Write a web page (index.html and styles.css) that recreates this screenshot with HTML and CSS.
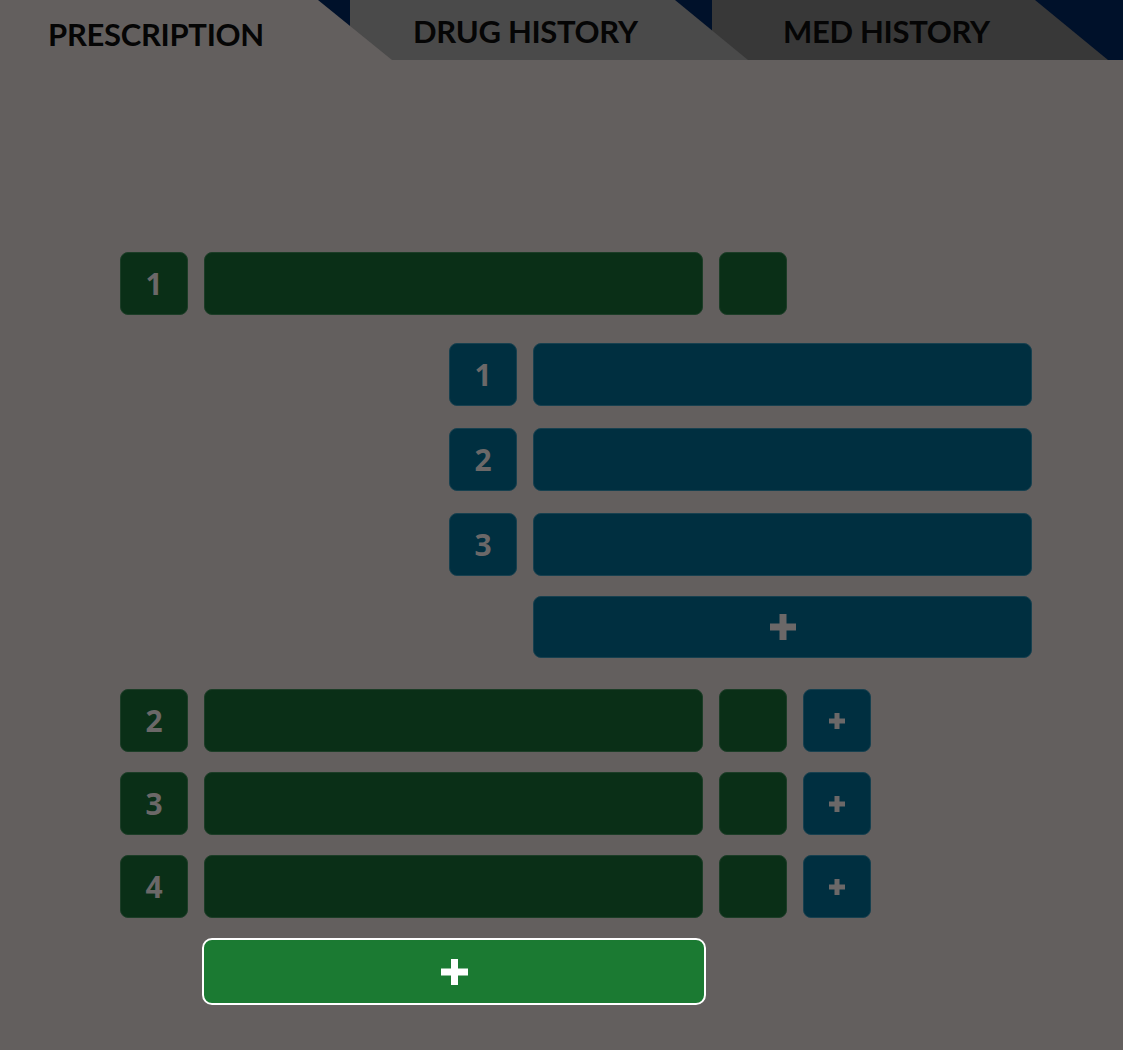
FILE: index.html
```html
<!DOCTYPE html>
<html lang="en">
<head>
    <meta charset="UTF-8">
    <meta name="viewport" content="width=device-width, initial-scale=1.0">
    <title>Prescription</title>
    <link rel="stylesheet" href="styles.css">
</head>
<body>
    <!-- 상단 탭 -->
    <header class="tabs">
        <div class="tab tab-prescription active">PRESCRIPTION</div>
        <div class="tab tab-drug">DRUG HISTORY</div>
        <div class="tab tab-med">MED HISTORY</div>
    </header>

    <main class="rx-list">
        <!-- 처방 1 -->
        <div class="rx-row">
            <div class="box num green">1</div>
            <div class="box bar green"></div>
            <div class="box small green"></div>
        </div>

        <!-- 처방 1의 하위 항목 -->
        <div class="sub-list">
            <div class="sub-row">
                <div class="box num blue">1</div>
                <div class="box bar blue"></div>
            </div>
            <div class="sub-row">
                <div class="box num blue">2</div>
                <div class="box bar blue"></div>
            </div>
            <div class="sub-row">
                <div class="box num blue">3</div>
                <div class="box bar blue"></div>
            </div>
            <div class="box bar blue sub-add">
                <svg width="26" height="26" viewBox="0 0 26 26"><path d="M9.5 0h7v9.5H26v7h-9.5V26h-7v-9.5H0v-7h9.5z" fill="#6b6868"/></svg>
            </div>
        </div>

        <div class="rx-group">
            <div class="rx-row">
                <div class="box num green">2</div>
                <div class="box bar green"></div>
                <div class="box small green"></div>
                <div class="box small blue plus-small">
                    <svg width="16" height="16" viewBox="0 0 16 16"><path d="M5.5 0h5v5.5H16v5h-5.5V16h-5v-5.5H0v-5h5.5z" fill="#6b6868"/></svg>
                </div>
            </div>
            <div class="rx-row">
                <div class="box num green">3</div>
                <div class="box bar green"></div>
                <div class="box small green"></div>
                <div class="box small blue plus-small">
                    <svg width="16" height="16" viewBox="0 0 16 16"><path d="M5.5 0h5v5.5H16v5h-5.5V16h-5v-5.5H0v-5h5.5z" fill="#6b6868"/></svg>
                </div>
            </div>
            <div class="rx-row">
                <div class="box num green">4</div>
                <div class="box bar green"></div>
                <div class="box small green"></div>
                <div class="box small blue plus-small">
                    <svg width="16" height="16" viewBox="0 0 16 16"><path d="M5.5 0h5v5.5H16v5h-5.5V16h-5v-5.5H0v-5h5.5z" fill="#6b6868"/></svg>
                </div>
            </div>
        </div>

        <button type="button" class="add-rx">
            <svg width="27" height="26" viewBox="0 0 27 26"><path d="M10 0h7v9.5h10v7H17V26h-7v-9.5H0v-7h10z" fill="#ffffff"/></svg>
        </button>
    </main>
</body>
</html>
```

FILE: styles.css
```css
body {
    margin: 0;
    background-color: #635f5e;
    font-family: "Lato", "DejaVu Sans", sans-serif;
}

/* 상단 탭 */
.tabs {
    display: flex;
    height: 60px;
    background-color: #00112a;
}

.tab {
    position: relative;
    height: 60px;
    line-height: 60px;
    font-size: 31px;
    letter-spacing: -0.3px;
    font-weight: 700;
    color: #050505;
    box-sizing: border-box;
    padding-top: 1px;
    white-space: nowrap;
}

.tab-prescription {
    width: 392px;
    padding-left: 48px;
    padding-top: 4px;
    background-color: #635f5e;
    clip-path: polygon(0 0, 318px 0, 392px 60px, 0 60px);
    z-index: 3;
}

.tab-drug {
    width: 398px;
    margin-left: -42px;
    padding-left: 63px;
    background-color: #4a4a4a;
    clip-path: polygon(0 0, 325px 0, 398px 60px, 0 60px);
    z-index: 2;
}

.tab-med {
    width: 396px;
    margin-left: -36px;
    padding-left: 71px;
    background-color: #383838;
    clip-path: polygon(0 0, 323px 0, 396px 60px, 0 60px);
    z-index: 1;
}

/* 처방 목록 */
.rx-list {
    display: flex;
    flex-direction: column;
    padding: 192px 0 0 120px;
}

.rx-row,
.sub-row {
    display: flex;
    gap: 16px;
}

.rx-group {
    display: flex;
    flex-direction: column;
    gap: 20px;
    margin-top: 31px;
}

.sub-list {
    display: flex;
    flex-direction: column;
    gap: 22px;
    margin: 28px 0 0 329px;
}

.box {
    height: 63px;
    border-radius: 8px;
    box-sizing: border-box;
    display: flex;
    align-items: center;
    justify-content: center;
}

.green {
    background-color: #0a2f17;
    border: 1px solid #1c3d27;
}

.blue {
    background-color: #002f40;
    border: 1px solid #17404f;
}

.num {
    width: 68px;
    font-family: "Open Sans", "Lato", sans-serif;
    font-size: 30px;
    font-weight: 700;
    color: #6b6868;
}

.bar {
    width: 499px;
}

.small {
    width: 68px;
}

.sub-add {
    margin: -2px 0 0 84px;
    height: 62px;
}

.add-rx {
    width: 504px;
    height: 67px;
    margin: 20px 0 0 82px;
    background-color: #1b7a32;
    border: 2px solid #ffffff;
    border-radius: 10px;
    display: flex;
    align-items: center;
    justify-content: center;
    cursor: pointer;
    padding: 0;
}
```
